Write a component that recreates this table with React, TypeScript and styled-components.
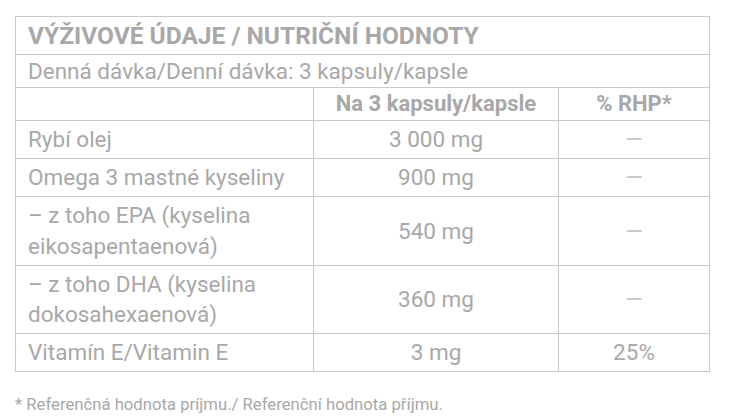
import React from "react";
import styled, { createGlobalStyle } from "styled-components";

const GlobalStyle = createGlobalStyle`
  body {
    margin: 0;
    background: #ffffff;
    font-family: Roboto, "Liberation Sans", sans-serif;
  }
`;

const Page = styled.div`
  padding: 16px 31px 0 15px;
  color: #a8a8a8;
`;

const Table = styled.table`
  width: 694px;
  border-collapse: collapse;
  table-layout: fixed;
`;

const Cell = styled.td<{ $align?: "left" | "center" }>`
  border: 1px solid #c9c9c9;
  padding: 3px 12px 4px;
  font-size: 22.5px;
  line-height: 30.2px;
  font-weight: 400;
  text-align: ${(p) => p.$align ?? "left"};
  vertical-align: middle;
`;

const TitleCell = styled(Cell)`
  font-size: 24.5px;
  font-weight: 700;
  line-height: 30px;
  padding-top: 4px;
  padding-bottom: 3px;
`;

const DoseCell = styled(Cell)`
  line-height: 26px;
  padding-top: 3px;
  padding-bottom: 3px;
`;

const HeadCell = styled(Cell)`
  font-size: 22px;
  font-weight: 700;
  line-height: 26px;
  padding-top: 3px;
  padding-bottom: 3px;
`;

const Dash = styled.span`
  color: #c6c6c6;
`;

const Note = styled.p`
  margin: 23px 0 0;
  font-size: 16.7px;
  color: #a8a8a8;
`;

type Row = { name: string; amount: string; rhp?: string };

const rows: Row[] = [
  { name: "Rybí olej", amount: "3 000 mg" },
  { name: "Omega 3 mastné kyseliny", amount: "900 mg" },
  { name: "– z toho EPA (kyselina eikosapentaenová)", amount: "540 mg" },
  { name: "– z toho DHA (kyselina dokosahexaenová)", amount: "360 mg" },
  { name: "Vitamín E/Vitamin E", amount: "3 mg", rhp: "25%" },
];

export default function App() {
  return (
    <Page>
      <GlobalStyle />
      <Table>
        <colgroup>
          <col style={{ width: 298 }} />
          <col style={{ width: 245 }} />
          <col style={{ width: 151 }} />
        </colgroup>
        <tbody>
          <tr>
            <TitleCell colSpan={3}>VÝŽIVOVÉ ÚDAJE / NUTRIČNÍ HODNOTY</TitleCell>
          </tr>
          <tr>
            <DoseCell colSpan={3}>Denná dávka/Denní dávka: 3 kapsuly/kapsle</DoseCell>
          </tr>
          <tr>
            <HeadCell />
            <HeadCell $align="center">Na 3 kapsuly/kapsle</HeadCell>
            <HeadCell $align="center">% RHP*</HeadCell>
          </tr>
          {rows.map((r) => (
            <tr key={r.name}>
              <Cell>{r.name}</Cell>
              <Cell $align="center">{r.amount}</Cell>
              <Cell $align="center">{r.rhp ?? <Dash>—</Dash>}</Cell>
            </tr>
          ))}
        </tbody>
      </Table>
      <Note>* Referenčná hodnota príjmu./ Referenční hodnota příjmu.</Note>
    </Page>
  );
}
